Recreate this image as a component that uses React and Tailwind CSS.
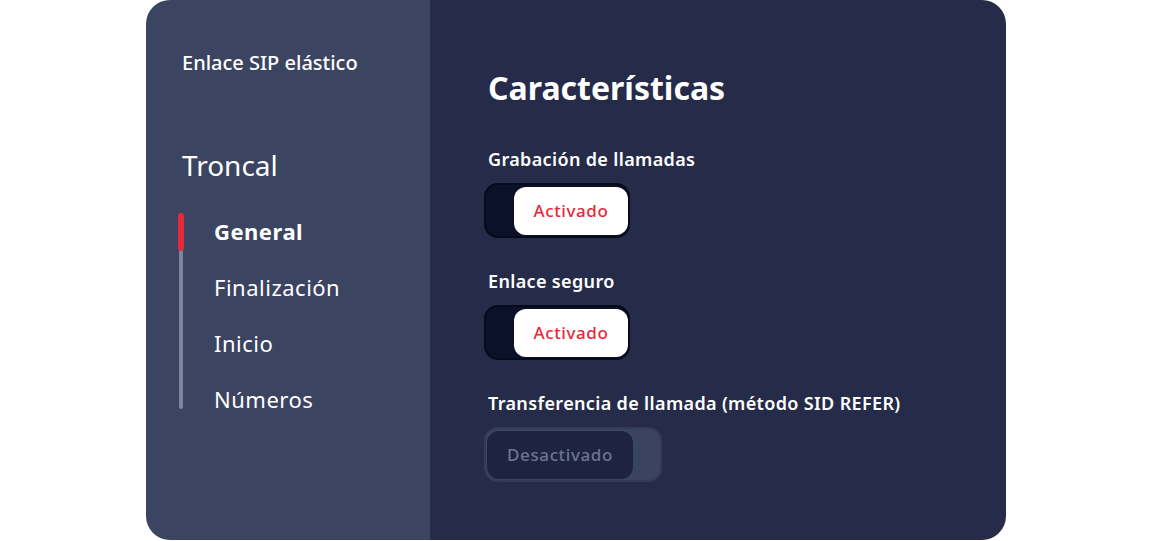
import React from "react";

function Toggle({ on, label }) {
  if (on) {
    return (
      <div className="flex h-[55px] w-[146px] items-center justify-end rounded-[14px] border-2 border-[#060b1c] bg-[#0a1129] pr-[0px]">
        <div className="flex h-[48px] w-[114px] items-center justify-center rounded-[12px] bg-white text-[17px] font-medium tracking-[0.6px] text-[#e8283c]">
          {label}
        </div>
      </div>
    );
  }
  return (
    <div className="flex h-[55px] w-[178px] items-center rounded-[14px] border-2 border-[#333b58] bg-[#3a4361] pl-[1px]">
      <div className="flex h-[48px] w-[146px] items-center justify-center rounded-[12px] bg-[#1d2340] text-[17px] font-medium tracking-[0.6px] text-[#6e7591]">
        {label}
      </div>
    </div>
  );
}

export default function App() {
  const items = ["General", "Finalización", "Inicio", "Números"];
  return (
    <div
      className="h-[541px] w-[1152px] bg-white"
      style={{ fontFamily: '"Noto Sans", "Open Sans", sans-serif' }}
    >
      <div className="ml-[146px] flex h-[540px] w-[860px] overflow-hidden rounded-[24px]">
        <div className="flex w-[284px] flex-col bg-[#3b4460] pl-[36px]">
          <div className="mt-[49px] text-[20px] font-medium leading-[28px] text-white">
            Enlace SIP elástico
          </div>
          <div className="mt-[70px] text-[28px] font-normal leading-[36px] text-white">
            Troncal
          </div>
          <div className="relative mt-[29px] flex flex-col pl-[32px]">
            <div className="absolute left-[-3px] top-[1px] h-[196px] w-[4px] rounded-full bg-[#7d849c]" />
            <div className="absolute left-[-4px] top-[1px] h-[38px] w-[6px] rounded-full bg-[#e8283c]" />
            {items.map((it, i) => (
              <div
                key={it}
                className={
                  "flex h-[56px] items-center text-[22px] leading-[30px] tracking-[0.5px] text-white " +
                  (i === 0 ? "font-bold" : "font-normal")
                }
                style={{ marginTop: i === 0 ? -9 : 0 }}
              >
                {it}
              </div>
            ))}
          </div>
        </div>
        <div className="flex flex-1 flex-col bg-[#252b48] pl-[58px]">
          <div className="mt-[66px] text-[32px] font-bold leading-[44px] text-white">
            Características
          </div>
          <div className="mt-[37px] text-[18px] font-semibold leading-[24px] tracking-[0.35px] text-white">
            Grabación de llamadas
          </div>
          <div className="ml-[-4px] mt-[12px]">
            <Toggle on label="Activado" />
          </div>
          <div className="mt-[31px] text-[18px] font-semibold leading-[24px] tracking-[0.35px] text-white">
            Enlace seguro
          </div>
          <div className="ml-[-4px] mt-[12px]">
            <Toggle on label="Activado" />
          </div>
          <div className="mt-[31px] text-[18px] font-semibold leading-[24px] tracking-[0.35px] text-white">
            Transferencia de llamada (método SID REFER)
          </div>
          <div className="ml-[-4px] mt-[12px]">
            <Toggle on={false} label="Desactivado" />
          </div>
        </div>
      </div>
    </div>
  );
}
